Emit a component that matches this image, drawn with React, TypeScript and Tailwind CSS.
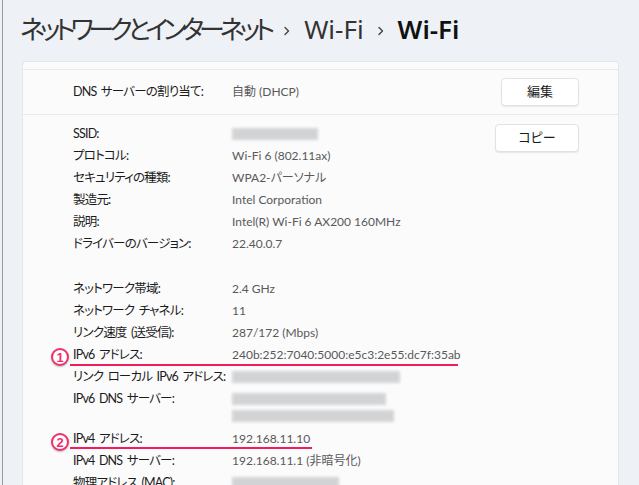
import React from 'react';

type Row = {
  label: string;
  value?: string;
  blur?: number[];
  h?: number;
};

const groupA: Row[] = [
  { label: 'SSID:', blur: [86] },
  { label: 'プロトコル:', value: 'Wi-Fi 6 (802.11ax)' },
  { label: 'セキュリティの種類:', value: 'WPA2-パーソナル' },
  { label: '製造元:', value: 'Intel Corporation' },
  { label: '説明:', value: 'Intel(R) Wi-Fi 6 AX200 160MHz' },
  { label: 'ドライバーのバージョン:', value: '22.40.0.7' },
];

const groupB: Row[] = [
  { label: 'ネットワーク帯域:', value: '2.4 GHz' },
  { label: 'ネットワーク チャネル:', value: '11' },
  { label: 'リンク速度 (送受信):', value: '287/172 (Mbps)' },
  { label: 'IPv6 アドレス:', value: '240b:252:7040:5000:e5c3:2e55:dc7f:35ab' },
  { label: 'リンク ローカル IPv6 アドレス:', blur: [168] },
  { label: 'IPv6 DNS サーバー:', blur: [154, 162], h: 40 },
  { label: 'IPv4 アドレス:', value: '192.168.11.10' },
  { label: 'IPv4 DNS サーバー:', value: '192.168.11.1 (非暗号化)' },
  { label: '物理アドレス (MAC):', blur: [107] },
];

function Chevron() {
  return (
    <svg width="10" height="14" viewBox="0 0 10 14" className="mx-[12px] mt-[3px]">
      <path d="M3 3.5 L6.5 7 L3 10.5" fill="none" stroke="#444" strokeWidth="1.4" strokeLinecap="round" strokeLinejoin="round" />
    </svg>
  );
}

function InfoRow({ row }: { row: Row }) {
  return (
    <div className="flex" style={{ height: row.h ?? 22 }}>
      <div className="w-[159px] shrink-0 whitespace-nowrap text-[12.5px] leading-[22px] tracking-[-0.8px] [word-spacing:2px] text-[#1b1b1b]">{row.label}</div>
      <div className="whitespace-nowrap text-[12px] leading-[22px] text-[#595959]">
        {row.value}
        {row.blur && (
          <div className="flex flex-col gap-[5px] pt-[5px]">
            {row.blur.map((w, i) => (
              <div key={i} className="h-[12px] bg-[#c9cacc] blur-[1.5px] opacity-80" style={{ width: w }} />
            ))}
          </div>
        )}
      </div>
    </div>
  );
}

function Badge({ n }: { n: string }) {
  return (
    <div className="flex h-[18px] w-[18px] items-center justify-center rounded-full border-2 border-[#f0306a] bg-white font-['Liberation_Sans',sans-serif] text-[13px] font-bold leading-none text-[#f0306a] shadow-[0_1px_2px_rgba(0,0,0,0.25)]">
      {n}
    </div>
  );
}

export default function App() {
  return (
    <div className="relative h-[485px] w-[639px] overflow-hidden bg-[#eef1f6] font-['Lato','Noto_Sans_CJK_JP',sans-serif] text-[13px] [font-feature-settings:'palt']">
      <div className="absolute left-[2px] top-0 h-full w-px bg-[#9a9a9a]" />

      <div className="flex h-[61px] items-center pb-[3px] pl-[20px] text-[26px] text-[#333]">
        <span className="tracking-[-5px]">ネットワークとインターネット</span>
        <Chevron />
        <span className="font-['Noto_Sans',sans-serif]">Wi-Fi</span>
        <Chevron />
        <span className="font-['Noto_Sans',sans-serif] font-semibold text-[#111]">Wi-Fi</span>
      </div>

      <div className="ml-[22px] w-[597px] rounded-t-[4px] border border-b-0 border-[#e3e6ea] bg-[#fbfbfc]">
        <div className="h-[8px] border-b border-[#e5e8ec]" />

        <div className="flex h-[45px] items-center border-b border-[#e5e8ec] pl-[50px] pr-[39px]">
          <div className="w-[159px] text-[12.5px] tracking-[-0.8px] [word-spacing:2px] text-[#1b1b1b]">DNS サーバーの割り当て:</div>
          <div className="flex-1 text-[12px] text-[#595959]">自動 (DHCP)</div>
          <button className="h-[28px] w-[78px] rounded-[4px] border border-[#e2e2e2] bg-white text-[13px] text-[#1b1b1b] shadow-[0_1px_1px_rgba(0,0,0,0.08)]">
            編集
          </button>
        </div>

        <div className="relative flex pl-[50px] pr-[39px] pt-[8px]">
          <div className="flex-1">
            {groupA.map((r) => (
              <InfoRow key={r.label} row={r} />
            ))}
            <div className="h-[23px]" />
            {groupB.map((r) => (
              <InfoRow key={r.label} row={r} />
            ))}
          </div>
          <button className="mt-[1px] h-[28px] w-[84px] self-start rounded-[4px] border border-[#e2e2e2] bg-white text-[13px] text-[#1b1b1b] shadow-[0_1px_1px_rgba(0,0,0,0.08)]">
            コピー
          </button>
        </div>
      </div>

      {/* annotations */}
      <div className="absolute left-[70px] top-[364px] h-[2px] w-[388px] bg-[#f01c5c]" />
      <div className="absolute left-[70px] top-[447px] h-[2px] w-[242px] bg-[#f01c5c]" />
      <div className="absolute left-[51px] top-[348px]">
        <Badge n="1" />
      </div>
      <div className="absolute left-[51px] top-[433px]">
        <Badge n="2" />
      </div>
    </div>
  );
}
